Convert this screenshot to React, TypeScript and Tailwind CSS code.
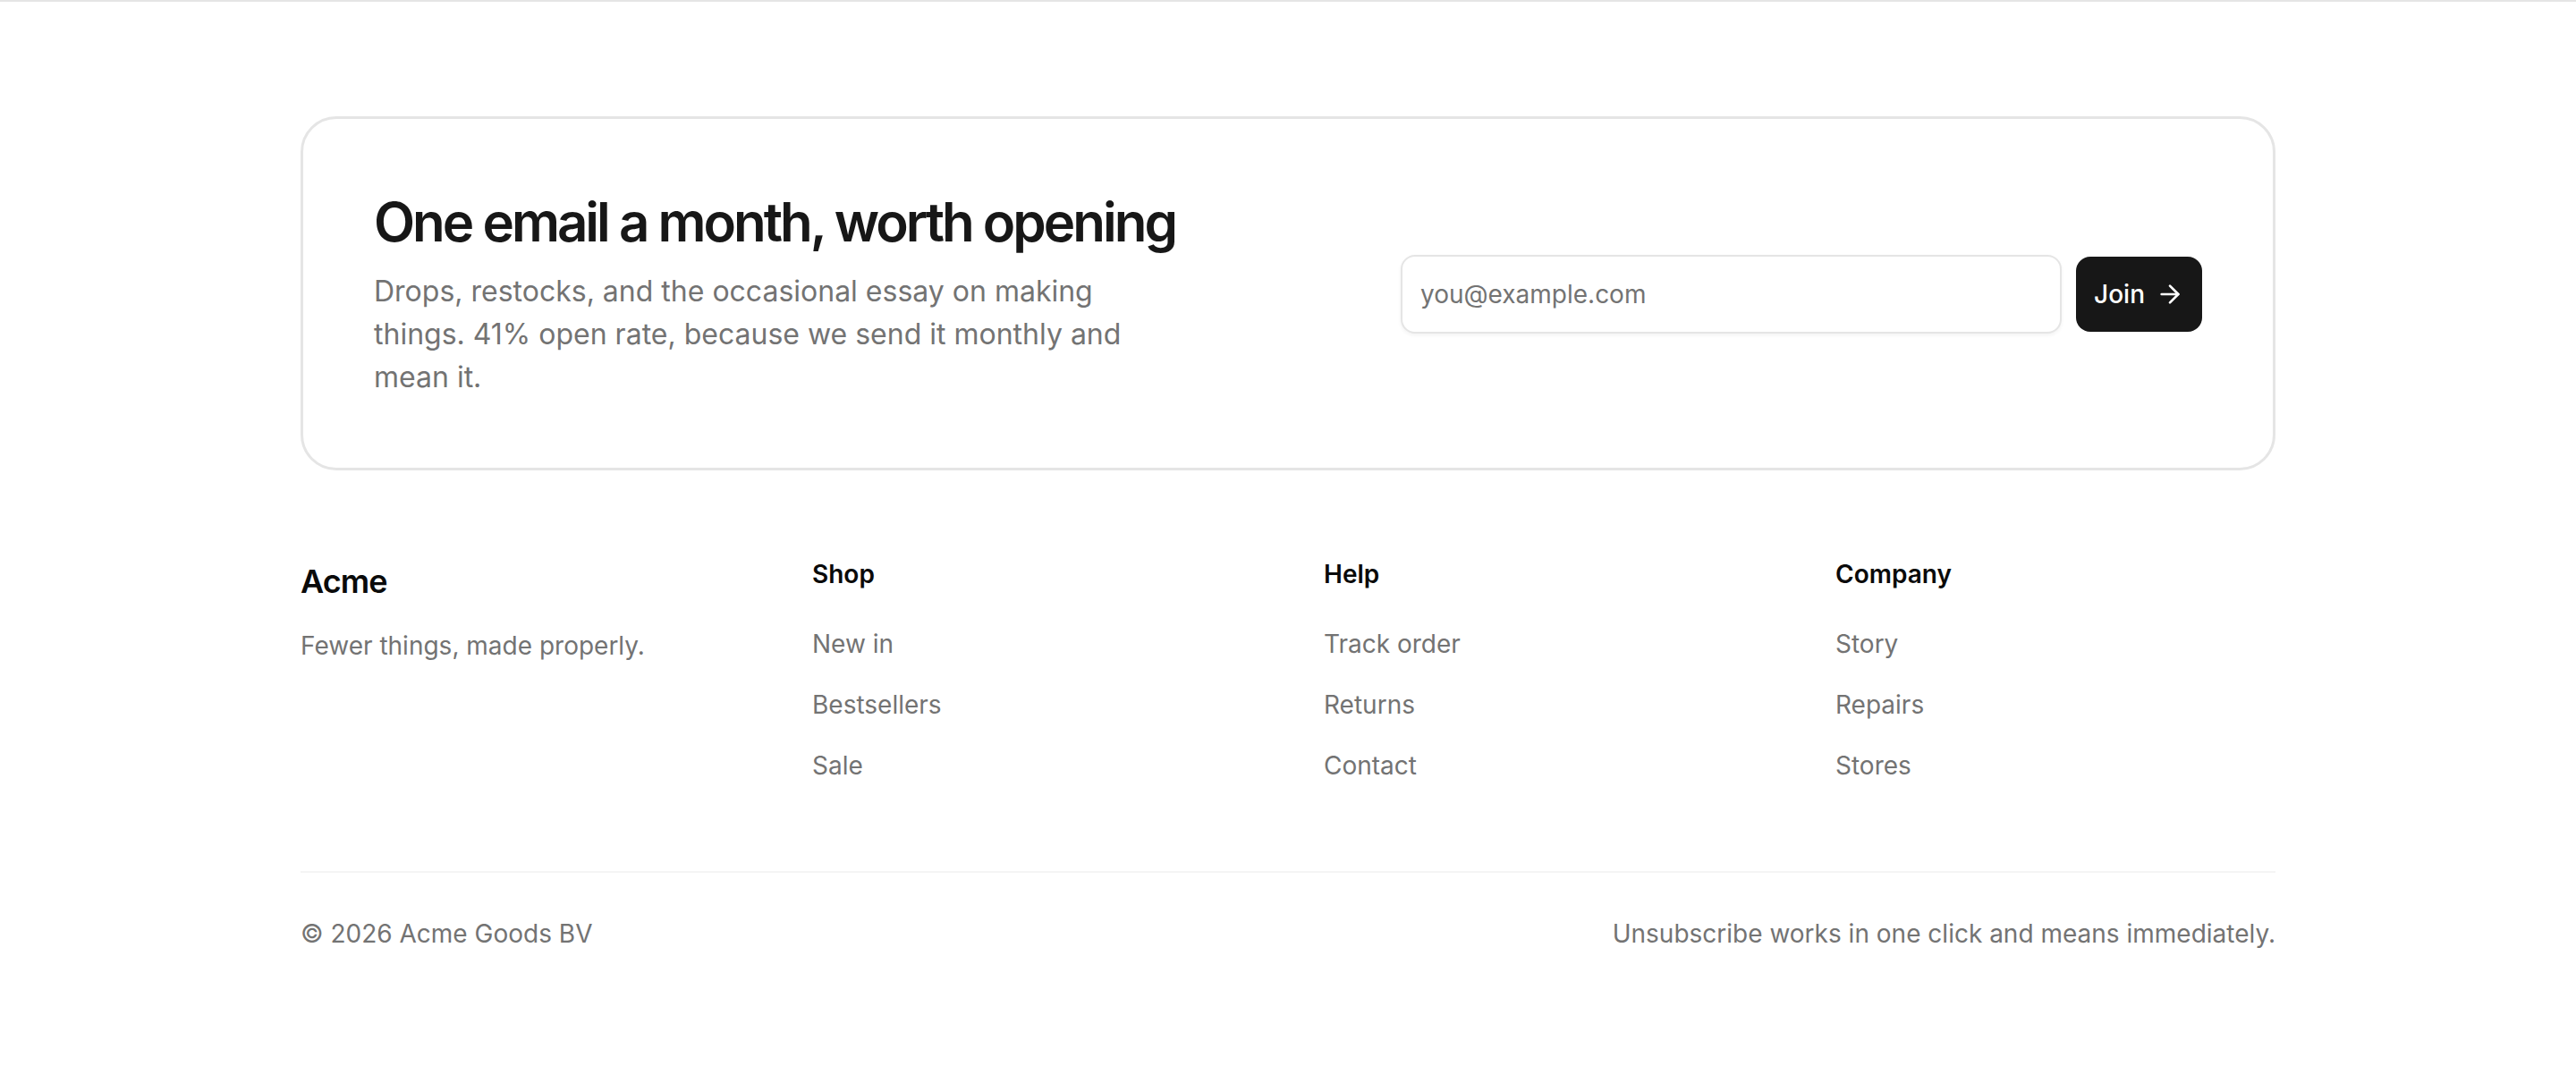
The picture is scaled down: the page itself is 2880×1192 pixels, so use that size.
import { ArrowRight } from "lucide-react";

const columns = [
  { title: "Shop", links: ["New in", "Bestsellers", "Sale"] },
  { title: "Help", links: ["Track order", "Returns", "Contact"] },
  { title: "Company", links: ["Story", "Repairs", "Stores"] },
];

export default function App() {
  return (
    <footer className="border-t-2 border-neutral-200 bg-white font-['Inter','Noto_Sans',sans-serif] antialiased">
      <div className="mx-auto max-w-[2304px] px-12 py-32">
        <div className="flex items-center justify-between gap-20 rounded-[40px] border-[3px] border-neutral-200 px-[79px] pt-[79px] pb-[77px]">
          <div className="min-w-0">
            <h2 className="text-[60px] leading-[72px] font-semibold tracking-tighter text-neutral-900">
              One email a month, worth opening
            </h2>
            <p className="mt-[18px] max-w-[896px] text-[32px] leading-[48px] text-neutral-500">
              Drops, restocks, and the occasional essay on making things. 41% open rate, because we send it monthly and
              mean it.
            </p>
          </div>
          <form className="flex w-full max-w-[896px] items-center gap-4" onSubmit={(e) => e.preventDefault()}>
            <input
              type="email"
              placeholder="you@example.com"
              className="h-[88px] min-w-0 flex-1 rounded-2xl border-2 border-neutral-200 bg-white px-5 text-[28px] text-neutral-900 shadow-[0_2px_4px_rgba(0,0,0,0.05)] outline-none placeholder:text-neutral-500"
            />
            <button
              type="submit"
              className="flex h-[84px] items-center gap-3 rounded-2xl bg-neutral-900 px-5 text-[28px] font-medium text-white"
            >
              Join
              <ArrowRight size={32} strokeWidth={2} />
            </button>
          </form>
        </div>

        <div className="mt-24 grid grid-cols-4 gap-20">
          <div>
            <div className="text-[36px] leading-[56px] font-semibold tracking-tight text-neutral-950">Acme</div>
            <p className="mt-6 text-[28px] leading-[40px] text-neutral-500">Fewer things, made properly.</p>
          </div>
          {columns.map((col) => (
            <div key={col.title}>
              <h3 className="text-[28px] leading-[40px] font-semibold text-neutral-950">{col.title}</h3>
              <ul className="mt-[38px] flex flex-col gap-7">
                {col.links.map((l) => (
                  <li key={l}>
                    <a href="#" className="text-[28px] leading-[40px] text-neutral-500">
                      {l}
                    </a>
                  </li>
                ))}
              </ul>
            </div>
          ))}
        </div>

        <div className="mt-[98px] flex items-center justify-between border-t-2 border-neutral-100 pt-12 text-[28px] leading-[40px] text-neutral-500">
          <span>© 2026 Acme Goods BV</span>
          <span>Unsubscribe works in one click and means immediately.</span>
        </div>
      </div>
    </footer>
  );
}
